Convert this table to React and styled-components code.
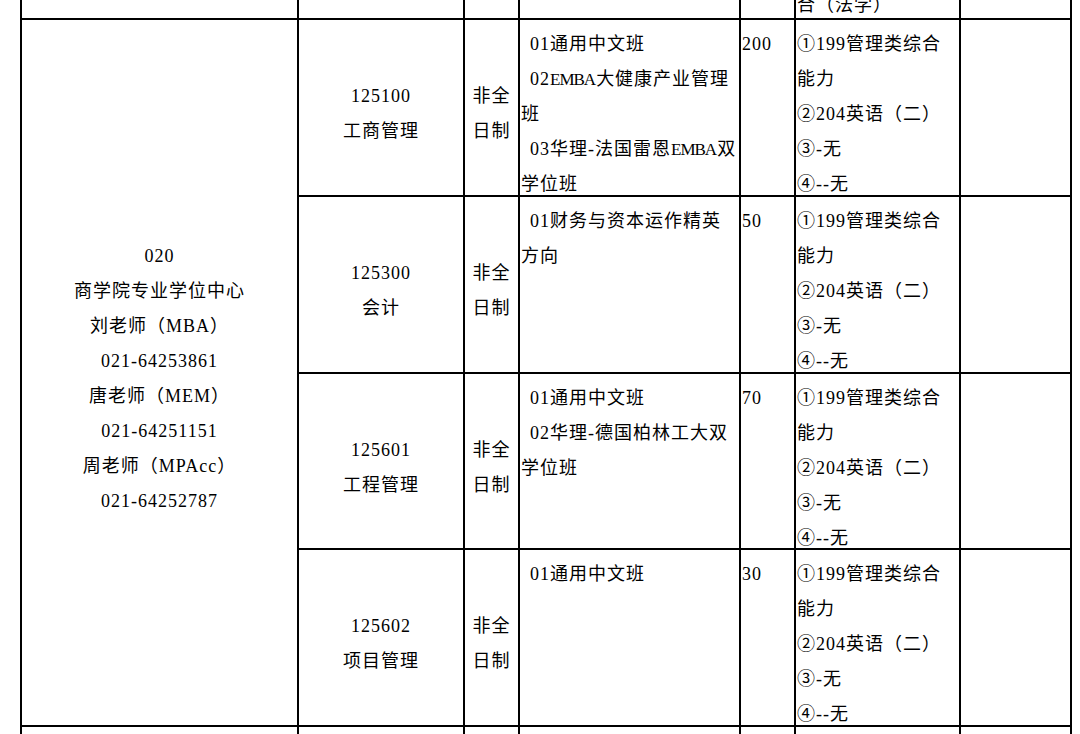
import React from 'react'
import styled, { createGlobalStyle } from 'styled-components'

const GlobalStyle = createGlobalStyle`
  html, body {
    margin: 0;
    padding: 0;
    background: #fff;
  }
  body {
    overflow: hidden;
  }
`

const Page = styled.div`
  width: 1080px;
  height: 734px;
  overflow: hidden;
  font-family: 'Liberation Serif', 'Noto Sans CJK SC', serif;
  font-size: 18px;
  letter-spacing: 1px;
  color: #000;
`

const Table = styled.table`
  border-collapse: collapse;
  table-layout: fixed;
  width: 1050px;
  margin: -42px 0 0 20px;
`

const Row = styled.tr`
  height: ${(p) => p.$height}px;
`

const Cell = styled.td`
  border: 2px solid #000;
  padding: 0;
  text-align: ${(p) => (p.$center ? 'center' : 'left')};
  vertical-align: ${(p) => (p.$bottom ? 'bottom' : 'top')};
`

// fixed-height box so overflowing lines do not stretch the row (like Word's "exact" row height)
const Block = styled.div`
  box-sizing: border-box;
  height: ${(p) => p.$height}px;
  display: flex;
  flex-direction: column;
  justify-content: ${(p) => (p.$center ? 'center' : 'flex-start')};
  padding-top: ${(p) => p.$pad ?? 7}px;
  padding-left: ${(p) => (p.$center ? 0 : 1)}px;
`

const Line = styled.div`
  line-height: 35px;
  white-space: nowrap;
  text-indent: ${(p) => (p.$indent ? 9 : 0)}px;
`

const Latin = styled.span`
  font-size: 17px;
  letter-spacing: -1px;
  margin-right: 1px;
`

const TailLine = styled(Line)`
  margin-bottom: -5px;
  padding-left: 1px;
`

const contacts = [
  '020',
  '商学院专业学位中心',
  '刘老师（MBA）',
  '021-64253861',
  '唐老师（MEM）',
  '021-64251151',
  '周老师（MPAcc）',
  '021-64252787',
]

const exams = [['①199管理类综合', '能力'], ['②204英语（二）'], ['③-无'], ['④--无']]

const programs = [
  {
    code: '125100',
    name: '工商管理',
    directions: [['01通用中文班'], ['02EMBA大健康产业管理', '班'], ['03华理-法国雷恩EMBA双', '学位班']],
    quota: '200',
    height: 177,
  },
  {
    code: '125300',
    name: '会计',
    directions: [['01财务与资本运作精英', '方向']],
    quota: '50',
    height: 177,
  },
  {
    code: '125601',
    name: '工程管理',
    directions: [['01通用中文班'], ['02华理-德国柏林工大双', '学位班']],
    quota: '70',
    height: 176,
  },
  {
    code: '125602',
    name: '项目管理',
    directions: [['01通用中文班']],
    quota: '30',
    height: 177,
  },
]

const totalHeight = programs.reduce((sum, p) => sum + p.height, 0)

function withLatin(text) {
  return text.split(/(EMBA)/).map((part, i) => (part === 'EMBA' ? <Latin key={i}>{part}</Latin> : part))
}

function Paragraphs({ items, indent }) {
  return items.map((lines, i) =>
    lines.map((text, j) => (
      <Line key={`${i}-${j}`} $indent={indent && j === 0}>
        {withLatin(text)}
      </Line>
    ))
  )
}

function Centered({ lines, height, pad = 13 }) {
  return (
    <Block $center $pad={pad} $height={height}>
      {lines.map((text) => (
        <Line key={text}>{text}</Line>
      ))}
    </Block>
  )
}

export default function App() {
  return (
    <Page>
      <GlobalStyle />
      <Table>
        <colgroup>
          <col style={{ width: 277 }} />
          <col style={{ width: 166 }} />
          <col style={{ width: 55 }} />
          <col style={{ width: 221 }} />
          <col style={{ width: 55 }} />
          <col style={{ width: 165 }} />
          <col style={{ width: 111 }} />
        </colgroup>
        <tbody>
          <Row $height={60}>
            <Cell />
            <Cell />
            <Cell />
            <Cell />
            <Cell />
            <Cell $bottom>
              <TailLine>合（法学）</TailLine>
            </Cell>
            <Cell />
          </Row>
          {programs.map((p, i) => (
            <Row key={p.code} $height={p.height}>
              {i === 0 && (
                <Cell rowSpan={programs.length} $center>
                  <Centered lines={contacts} height={totalHeight - 2} pad={12} />
                </Cell>
              )}
              <Cell $center>
                <Centered lines={[p.code, p.name]} height={p.height - 2} />
              </Cell>
              <Cell $center>
                <Centered lines={['非全', '日制']} height={p.height - 2} />
              </Cell>
              <Cell>
                <Block $height={p.height - 2}>
                  <Paragraphs items={p.directions} indent />
                </Block>
              </Cell>
              <Cell>
                <Block $height={p.height - 2}>
                  <Line>{p.quota}</Line>
                </Block>
              </Cell>
              <Cell>
                <Block $height={p.height - 2}>
                  <Paragraphs items={exams} />
                </Block>
              </Cell>
              <Cell />
            </Row>
          ))}
          <Row $height={60}>
            <Cell />
            <Cell />
            <Cell />
            <Cell />
            <Cell />
            <Cell />
            <Cell />
          </Row>
        </tbody>
      </Table>
    </Page>
  )
}
